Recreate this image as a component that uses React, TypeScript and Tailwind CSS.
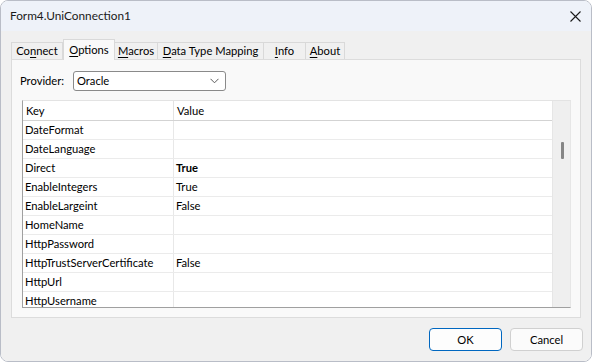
import React from "react";

type Row = { k: string; v: string; bold?: boolean };

const rows: Row[] = [
  { k: "DateFormat", v: "" },
  { k: "DateLanguage", v: "" },
  { k: "Direct", v: "True", bold: true },
  { k: "EnableIntegers", v: "True" },
  { k: "EnableLargeint", v: "False" },
  { k: "HomeName", v: "" },
  { k: "HttpPassword", v: "" },
  { k: "HttpTrustServerCertificate", v: "False" },
  { k: "HttpUrl", v: "" },
  { k: "HttpUsername", v: "" },
];

function Tab({
  pre,
  acc,
  post,
  w,
  active,
}: {
  pre: string;
  acc: string;
  post: string;
  w: string;
  active?: boolean;
}) {
  if (active) {
    return (
      <div
        className={`${w} h-[21px] -mb-px relative z-10 bg-[#f9f9f9] border border-b-0 border-[#d9d9d9] flex items-start justify-center pt-[4px]`}
      >
        <span>
          {pre}
          <span className="underline underline-offset-[2px] decoration-1">{acc}</span>
          {post}
        </span>
      </div>
    );
  }
  return (
    <div
      className={`${w} h-[17px] bg-[#f0f0f0] border border-b-0 border-[#d9d9d9] flex items-center justify-center -ml-px first:ml-0`}
    >
      <span>
        {pre}
        <span className="underline underline-offset-[2px] decoration-1">{acc}</span>
        {post}
      </span>
    </div>
  );
}

export default function App() {
  return (
    <div className="w-[592px] h-[362px] bg-white font-['Lato',sans-serif] text-[11.2px] text-[#000] leading-none">
      <div className="w-full h-full flex flex-col border border-[#b9bdc7] rounded-[8px] overflow-hidden">
        {/* title bar */}
        <div className="h-[30px] bg-[#eef2f9] flex items-center justify-between pl-[9px] pr-[9px]">
          <span className="text-[#1a1a1a] text-[11.8px]">Form4.UniConnection1</span>
          <svg width="11" height="11" viewBox="0 0 11 11" className="mr-[1px]">
            <path d="M0.5 0.5 L10.5 10.5 M10.5 0.5 L0.5 10.5" stroke="#1a1a1a" strokeWidth="1.1" fill="none" />
          </svg>
        </div>
        {/* body */}
        <div className="flex-1 bg-[#f0f0f0] flex flex-col pt-[8px]">
          {/* tabs */}
          <div className="flex items-end h-[20px] pl-[10px]">
            <Tab pre="Co" acc="n" post="nect" w="w-[52px]" />
            <Tab pre="" acc="O" post="ptions" w="w-[52px]" active />
            <Tab pre="" acc="M" post="acros" w="w-[44px]" />
            <Tab pre="" acc="D" post="ata Type Mapping" w="w-[107px]" />
            <Tab pre="" acc="I" post="nfo" w="w-[43px]" />
            <Tab pre="" acc="A" post="bout" w="w-[40px]" />
          </div>
          {/* page */}
          <div className="ml-[10px] w-[570px] h-[259px] bg-[#f9f9f9] border border-[#dcdcdc] flex flex-col">
            <div className="flex items-center mt-[11px] pl-[8px]">
              <span className="w-[53px]">Provider:</span>
              <div className="w-[153px] h-[20px] bg-white border border-[#8a8a8a] rounded-[3px] flex items-center justify-between pl-[3px] pr-[6px]">
                <span>Oracle</span>
                <svg width="9" height="6" viewBox="0 0 9 6">
                  <path d="M0.5 0.8 L4.5 4.8 L8.5 0.8" stroke="#5a5a5a" strokeWidth="1" fill="none" />
                </svg>
              </div>
            </div>
            {/* grid */}
            <div className="mt-[9px] ml-[10px] w-[549px] h-[208px] flex border-t border-r border-t-[#e3e3e3] border-r-[#e6e6e6] border-l border-b border-l-[#a0a0a0] border-b-[#a0a0a0] bg-white overflow-hidden">
              <div className="w-[530px] flex flex-col border-r border-[#e6e6e6]">
                <div className="h-[20px] shrink-0 flex border-b border-[#d3d3d3]">
                  <div className="w-[151px] border-r border-[#e3e3e3] flex items-center pl-[3px]">Key</div>
                  <div className="flex-1 flex items-center pl-[3px]">Value</div>
                </div>
                {rows.map((r) => (
                  <div key={r.k} className="h-[19px] shrink-0 flex border-b border-[#ebebeb]">
                    <div className="w-[151px] border-r border-[#e8e8e8] flex items-center pl-[2px]">{r.k}</div>
                    <div className={`flex-1 flex items-center pl-[2px] ${r.bold ? "font-bold" : ""}`}>{r.v}</div>
                  </div>
                ))}
              </div>
              <div className="flex-1 bg-[#efefef] flex flex-col items-center pt-[41px] pl-[1px]">
                <div className="w-[3px] h-[17px] bg-[#858585] rounded-[1px]" />
              </div>
            </div>
          </div>
          {/* buttons */}
          <div className="flex justify-end gap-[8px] mt-[10px] pr-[8px]">
            <div className="w-[73px] h-[23px] rounded-[4px] border border-[#0067c0] bg-[#fdfdfd] flex items-center justify-center">OK</div>
            <div className="w-[73px] h-[23px] rounded-[4px] border border-[#d0d0d0] bg-[#fbfbfb] flex items-center justify-center">Cancel</div>
          </div>
        </div>
      </div>
    </div>
  );
}
